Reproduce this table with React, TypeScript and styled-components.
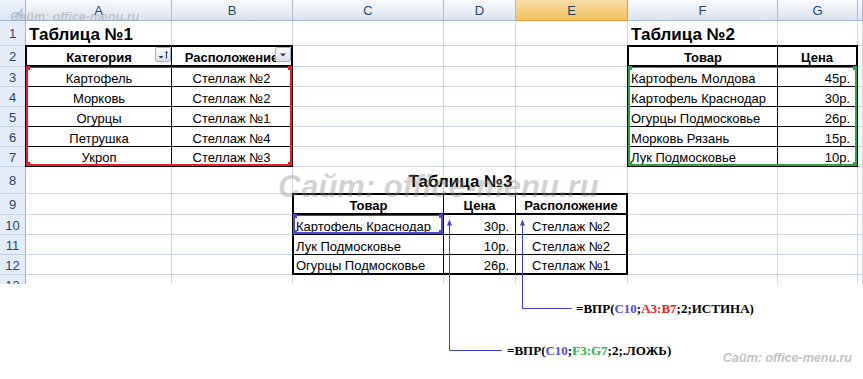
import React from 'react';
import styled, { createGlobalStyle } from 'styled-components';

// -- sheet metrics --
const COL_WIDTHS = [26, 146, 121, 151, 72, 112, 150, 80, 5];
const ROW_HEIGHTS = [21, 25, 21, 20, 20, 20, 20, 20, 27, 21, 20, 20, 20, 20];
const COL_NAMES = ['A', 'B', 'C', 'D', 'E', 'F', 'G', 'H'];
const SELECTED_COL = 'E';
const ROW_COUNT = 13;

type Align = 'left' | 'center' | 'right';

interface TableData {
  area: string;
  cols: string;
  head: string[];
  rows: string[][];
  aligns: Align[];
  filters?: boolean;
}

const TABLE_1: TableData = {
  area: '3 / 2 / 9 / 4',
  cols: '145px 1fr',
  head: ['Категория', 'Расположение'],
  rows: [
    ['Картофель', 'Стеллаж №2'],
    ['Морковь', 'Стеллаж №2'],
    ['Огурцы', 'Стеллаж №1'],
    ['Петрушка', 'Стеллаж №4'],
    ['Укроп', 'Стеллаж №3'],
  ],
  aligns: ['center', 'center'],
  filters: true,
};

const TABLE_2: TableData = {
  area: '3 / 7 / 9 / 9',
  cols: '149px 1fr',
  head: ['Товар', 'Цена'],
  rows: [
    ['Картофель Молдова', '45р.'],
    ['Картофель Краснодар', '30р.'],
    ['Огурцы Подмосковье', '26р.'],
    ['Морковь Рязань', '15р.'],
    ['Лук Подмосковье', '10р.'],
  ],
  aligns: ['left', 'right'],
};

const TABLE_3: TableData = {
  area: '10 / 4 / 14 / 7',
  cols: '150px 72px 1fr',
  head: ['Товар', 'Цена', 'Расположение'],
  rows: [
    ['Картофель Краснодар', '30р.', 'Стеллаж №2'],
    ['Лук Подмосковье', '10р.', 'Стеллаж №2'],
    ['Огурцы Подмосковье', '26р.', 'Стеллаж №1'],
  ],
  aligns: ['left', 'right', 'center'],
};

// -- global --
const GlobalStyle = createGlobalStyle`
  *, *::before, *::after { box-sizing: border-box; }
  html, body { margin: 0; padding: 0; background: #fff; }
  body { font-family: 'Liberation Sans', Arial, sans-serif; }
`;

// -- sub components --
const FilterIcon: React.FC<{ sorted?: boolean }> = ({ sorted }) =>
  sorted ? (
    <svg width="14" height="13" viewBox="0 0 14 13">
      <path d="M2.5 8h5l-2.5 2.5z" fill="#1f3a60" />
      <path d="M10.5 3.5v7" stroke="#1f3a60" strokeWidth="1" />
      <path d="M9 5l1.5-2 1.5 2z" fill="#1f3a60" />
    </svg>
  ) : (
    <svg width="14" height="13" viewBox="0 0 14 13">
      <path d="M4 5.5h6l-3 3z" fill="#1f3a60" />
    </svg>
  );

const Table: React.FC<{ data: TableData }> = ({ data }) => {
  const last_row = data.rows.length - 1;
  const last_col = data.head.length - 1;
  return (
    <TableBox $area={data.area} $cols={data.cols} $rows={`20px repeat(${data.rows.length - 1}, 20px) 1fr`}>
      {data.head.map((text, c) => (
        <HeadCell key={text + c} $lastCol={c === last_col}>
          {text}
          {data.filters && (
            <FilterButton>
              <FilterIcon sorted={c === 0} />
            </FilterButton>
          )}
        </HeadCell>
      ))}
      {data.rows.map((row, r) =>
        row.map((text, c) => (
          <BodyCell key={`${r}-${c}`} $align={data.aligns[c]} $lastCol={c === last_col} $lastRow={r === last_row}>
            {text}
          </BodyCell>
        ))
      )}
    </TableBox>
  );
};

const RangeFinder: React.FC<{ area: string; color: string }> = ({ area, color }) => (
  <Highlight $area={area} $color={color}>
    <Handle $color={color} $v="top" $h="left" />
    <Handle $color={color} $v="top" $h="right" />
    <Handle $color={color} $v="bottom" $h="left" />
    <Handle $color={color} $v="bottom" $h="right" />
  </Highlight>
);

// -- main component --
const App: React.FC = () => {
  const rows = Array.from({ length: ROW_COUNT }, (_, i) => i + 1);
  return (
    <Page>
      <GlobalStyle />
      <Sheet>
        <Corner $area="1 / 1" />
        {COL_NAMES.map((name, i) => (
          <ColHeader key={name} $area={`1 / ${i + 2}`} $selected={name === SELECTED_COL}>
            {/* the last column is only a sliver at the window edge */}
            {COL_WIDTHS[i + 1] > 20 ? name : ''}
          </ColHeader>
        ))}
        {rows.map((r) => (
          <React.Fragment key={r}>
            <RowHeader $area={`${r + 1} / 1`}>{r}</RowHeader>
            {COL_NAMES.map((name, c) => (
              <GridCell key={name} $area={`${r + 1} / ${c + 2}`} />
            ))}
          </React.Fragment>
        ))}

        <Title $area="2 / 2" $align="left" $pad={1}>Таблица №1</Title>
        <Title $area="2 / 7 / 3 / 9" $align="left" $pad={1}>Таблица №2</Title>
        <Title $area="9 / 4 / 10 / 7" $align="center" $pad={2}>Таблица №3</Title>

        <Table data={TABLE_1} />
        <Table data={TABLE_2} />
        <Table data={TABLE_3} />

        <RangeFinder area="4 / 2 / 9 / 4" color="#e5202a" />
        <RangeFinder area="4 / 7 / 9 / 9" color="#34a046" />
        <RangeFinder area="11 / 4 / 12 / 5" color="#4b4bd8" />
      </Sheet>

      <Footer>
        <FormulaRow $indent={576} $gap={0}>
          <span>
            =ВПР(<Ref $color="#4f4fd2">C10</Ref>;<Ref $color="#ea2428">A3:B7</Ref>;2;ИСТИНА)
          </span>
        </FormulaRow>
        <FormulaRow $indent={507} $gap={27}>
          <span>
            =ВПР(<Ref $color="#4f4fd2">C10</Ref>;<Ref $color="#2db24a">F3:G7</Ref>;2;.ЛОЖЬ)
          </span>
          <SiteMark>Сайт: office-menu.ru</SiteMark>
        </FormulaRow>
      </Footer>

      <WatermarkSmall>Сайт: office-menu.ru</WatermarkSmall>
      <WatermarkBig>Сайт: office-menu.ru</WatermarkBig>

      <Callouts width="863" height="379" viewBox="0 0 863 379">
        <path d="M449.5 223V350.5H502" fill="none" stroke="#4040cc" strokeWidth="1" />
        <path d="M447 225.5L449.5 219.5L452 225.5z" fill="#4040cc" />
        <path d="M522.5 223V308.5H572" fill="none" stroke="#4040cc" strokeWidth="1" />
        <path d="M520 225.5L522.5 219.5L525 225.5z" fill="#4040cc" />
      </Callouts>
    </Page>
  );
};

// -- styled components --

const Page = styled.div`
  position: relative;
  width: 863px;
  height: 379px;
  overflow: hidden;
  background: #fff;
`;

const Sheet = styled.div`
  display: grid;
  grid-template-columns: ${COL_WIDTHS.map((w) => `${w}px`).join(' ')};
  grid-template-rows: ${ROW_HEIGHTS.map((h) => `${h}px`).join(' ')};
  height: 284px;
  overflow: hidden;
  font-family: 'Liberation Sans', Arial, sans-serif;
  font-size: 13px;
  color: #000;
`;

const Placed = styled.div<{ $area: string }>`
  grid-area: ${(p) => p.$area};
  min-width: 0;
`;

const Corner = styled(Placed)`
  position: relative;
  background: linear-gradient(#eef3fa, #dbe5f3);
  border-right: 1px solid #9eb6ce;
  border-bottom: 1px solid #9eb6ce;

  &::after {
    content: '';
    position: absolute;
    right: 2px;
    bottom: 2px;
    border-left: 11px solid transparent;
    border-bottom: 11px solid #b8cbe4;
  }
`;

const ColHeader = styled(Placed)<{ $selected?: boolean }>`
  display: flex;
  align-items: center;
  justify-content: center;
  padding-top: 1px;
  overflow: hidden;
  color: ${(p) => (p.$selected ? '#1f3f5f' : '#2a4566')};
  background: ${(p) => (p.$selected ? 'linear-gradient(#f9dda6, #f1c15f)' : 'linear-gradient(#f9fbfd, #dce3ed)')};
  border-right: 1px solid ${(p) => (p.$selected ? '#f29536' : '#a9bcd4')};
  border-bottom: 1px solid ${(p) => (p.$selected ? '#f29536' : '#9eb6ce')};
`;

const RowHeader = styled(Placed)`
  display: flex;
  align-items: center;
  justify-content: center;
  padding-top: 1px;
  color: #2a4566;
  background: #e4ecf7;
  border-right: 1px solid #9eb6ce;
  border-bottom: 1px solid #c5d3e6;
`;

const GridCell = styled(Placed)`
  border-right: 1px solid #d0d7e5;
  border-bottom: 1px solid #d0d7e5;
`;

const Title = styled(Placed)<{ $align: Align; $pad: number }>`
  display: flex;
  align-items: flex-end;
  justify-content: ${(p) => (p.$align === 'center' ? 'center' : 'flex-start')};
  padding: 0 3px ${(p) => p.$pad}px;
  font-size: 17px;
  line-height: 20px;
  font-weight: bold;
  white-space: nowrap;
  z-index: 1;
`;

const TableBox = styled(Placed)<{ $cols: string; $rows: string }>`
  margin: -1px 0 0 -1px;
  display: grid;
  grid-template-columns: ${(p) => p.$cols};
  grid-template-rows: ${(p) => p.$rows};
  border: 2px solid #000;
  background: #fff;
  z-index: 1;
`;

const HeadCell = styled.div<{ $lastCol: boolean }>`
  position: relative;
  display: flex;
  align-items: flex-end;
  justify-content: center;
  overflow: hidden;
  white-space: nowrap;
  font-size: 13px;
  line-height: 15px;
  font-weight: bold;
  border-right: ${(p) => (p.$lastCol ? 'none' : '1px solid #000')};
  border-bottom: 2px solid #000;
`;

const BodyCell = styled.div<{ $align: Align; $lastCol: boolean; $lastRow: boolean }>`
  display: flex;
  align-items: flex-end;
  justify-content: ${(p) => (p.$align === 'left' ? 'flex-start' : p.$align === 'right' ? 'flex-end' : 'center')};
  padding: ${(p) => (p.$align === 'right' ? '0 6px 0 2px' : '0 2px')};
  overflow: hidden;
  white-space: nowrap;
  font-size: 13px;
  line-height: 15px;
  border-right: ${(p) => (p.$lastCol ? 'none' : '1px solid #000')};
  border-bottom: ${(p) => (p.$lastRow ? 'none' : '1px solid #000')};
`;

const FilterButton = styled.div`
  position: absolute;
  top: 0;
  right: 0;
  width: 16px;
  height: 15px;
  display: flex;
  align-items: center;
  justify-content: center;
  border: 1px solid #9fb0c8;
  border-radius: 2px;
  background: linear-gradient(#fdfdfe, #d9e0ea);
`;

const Highlight = styled(Placed)<{ $color: string }>`
  position: relative;
  margin: 0 1px 1px 0;
  border: 2px solid ${(p) => p.$color};
  border-top-width: 1px;
  pointer-events: none;
  z-index: 2;
`;

const Handle = styled.span<{ $color: string; $v: 'top' | 'bottom'; $h: 'left' | 'right' }>`
  position: absolute;
  ${(p) => p.$v}: -2px;
  ${(p) => p.$h}: -2px;
  width: 4px;
  height: 4px;
  background: ${(p) => p.$color};
`;

const Footer = styled.div`
  padding-top: 17px;
  font-family: 'Liberation Serif', 'Times New Roman', serif;
  font-weight: bold;
  font-size: 13px;
  line-height: 15px;
  color: #000;
`;

const FormulaRow = styled.div<{ $indent: number; $gap: number }>`
  display: flex;
  align-items: flex-start;
  padding-left: ${(p) => p.$indent}px;
  margin-top: ${(p) => p.$gap}px;
  white-space: nowrap;
`;

const Ref = styled.span<{ $color: string }>`
  color: ${(p) => p.$color};
`;

const SiteMark = styled.span`
  margin: 8px 11px 0 auto;
  font-family: 'Liberation Sans', Arial, sans-serif;
  font-style: italic;
  font-weight: bold;
  font-size: 12.5px;
  color: #c2c2c2;
`;

const WatermarkSmall = styled.div`
  position: absolute;
  left: 10px;
  top: 11px;
  font-family: 'Liberation Sans', Arial, sans-serif;
  font-style: italic;
  font-weight: bold;
  font-size: 12.5px;
  line-height: 1;
  color: rgba(150, 150, 150, 0.45);
  white-space: nowrap;
  pointer-events: none;
  z-index: 4;
`;

const WatermarkBig = styled(WatermarkSmall)`
  left: 278px;
  top: 171px;
  font-size: 31px;
  color: rgba(140, 140, 140, 0.4);
`;

const Callouts = styled.svg`
  position: absolute;
  left: 0;
  top: 0;
  pointer-events: none;
  z-index: 5;
`;

// -- finally export part --

export default App;
